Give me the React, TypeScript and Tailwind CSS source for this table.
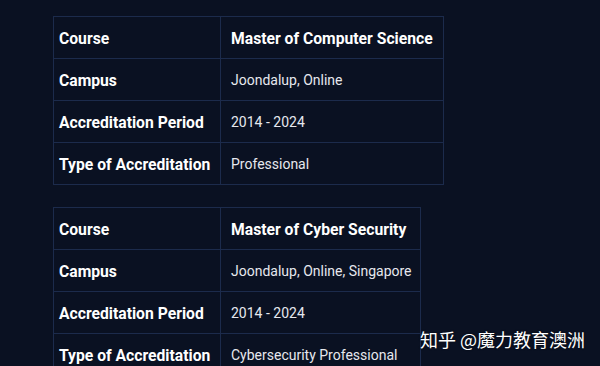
import { JSX } from "react";

type Row = { label: string; value: string };

const tables: { width: string; rows: Row[] }[] = [
    {
        width: "w-[391px]",
        rows: [
            { label: "Course", value: "Master of Computer Science" },
            { label: "Campus", value: "Joondalup, Online" },
            { label: "Accreditation Period", value: "2014 - 2024" },
            { label: "Type of Accreditation", value: "Professional" },
        ],
    },
    {
        width: "w-[368px]",
        rows: [
            { label: "Course", value: "Master of Cyber Security" },
            { label: "Campus", value: "Joondalup, Online, Singapore" },
            { label: "Accreditation Period", value: "2014 - 2024" },
            { label: "Type of Accreditation", value: "Cybersecurity Professional" },
        ],
    },
];

const AccreditationTable = ({ width, rows }: { width: string; rows: Row[] }): JSX.Element => (
    <table className={`${width} border-collapse table-fixed`}>
        <colgroup>
            <col className="w-[167px]" />
            <col />
        </colgroup>
        <tbody>
            {rows.map((row, i) => (
                <tr key={row.label} className="h-[42px]">
                    <td className="border border-[#1c2b4c] pl-[5px] pt-[2px] text-[15.7px] font-bold text-white whitespace-nowrap">
                        {row.label}
                    </td>
                    <td
                        className={`border border-[#1c2b4c] pl-[10px] pt-[2px] whitespace-nowrap ${
                            i === 0 ? "text-[15.7px] font-bold text-white" : "text-[14px] text-[#e6e8ee]"
                        }`}
                    >
                        {row.value}
                    </td>
                </tr>
            ))}
        </tbody>
    </table>
);

const App = (): JSX.Element => {
    return (
        <div className="relative w-[600px] h-[366px] overflow-hidden bg-[#0a1122] font-['Roboto',sans-serif]">
            <div className="flex flex-col gap-[22px] pl-[53px] pt-[16px]">
                {tables.map((t, i) => (
                    <AccreditationTable key={i} width={t.width} rows={t.rows} />
                ))}
            </div>
            <div className="absolute right-[15px] bottom-[14px] text-[18px] leading-[26px] text-white font-['Noto_Sans_CJK_SC',sans-serif] [text-shadow:0_0_2px_rgba(0,0,0,0.6)]">
                知乎 @魔力教育澳洲
            </div>
        </div>
    );
};

export default App;
